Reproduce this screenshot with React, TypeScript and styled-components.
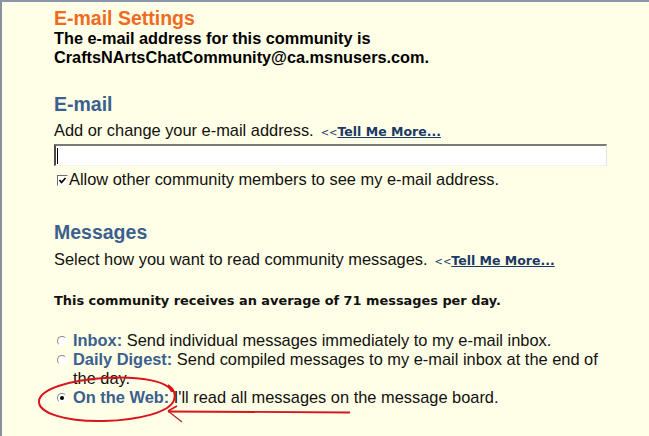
import React from "react";
import styled, { createGlobalStyle } from "styled-components";

const GlobalStyle = createGlobalStyle`
  html, body {
    margin: 0;
    padding: 0;
    background: #fffee6;
  }
  body {
    font-family: "Liberation Sans", Arial, sans-serif;
    color: #000;
  }
`;

const Page = styled.div`
  position: relative;
  box-sizing: border-box;
  width: 649px;
  height: 436px;
  overflow: hidden;
  background: #fffee6;
  border-top: 2px solid #8c96ab;
  border-left: 2px solid #87909e;
  padding: 5px 0 0 52px;
`;

const Column = styled.div`
  width: 553px;
  display: flex;
  flex-direction: column;
`;

const Title = styled.h1`
  margin: 0;
  font-size: 19.5px;
  line-height: 22px;
  font-weight: bold;
  color: #f06a1f;
`;

const Intro = styled.p`
  margin: 0;
  font-size: 16.3px;
  line-height: 19px;
  font-weight: bold;
`;

const SectionHeading = styled.h2<{ $gap: number }>`
  margin: ${(p) => p.$gap}px 0 0 0;
  font-size: 19.5px;
  line-height: 22px;
  font-weight: bold;
  color: #3b5f8e;
`;

const BodyText = styled.p<{ $gap?: number }>`
  margin: ${(p) => p.$gap ?? 0}px 0 0 0;
  font-size: 16.4px;
  line-height: 19px;
  color: #111;
`;

const Chevrons = styled.span`
  font-family: "DejaVu Sans", Verdana, sans-serif;
  font-size: 10px;
  margin-left: 7px;
  color: #1c3966;
`;

const MoreLink = styled.a`
  font-family: "DejaVu Sans", Verdana, sans-serif;
  font-size: 12.5px;
  font-weight: bold;
  color: #1c3966;
  text-decoration: underline;
`;

const EmailInput = styled.div`
  box-sizing: border-box;
  margin-top: 2px;
  width: 553px;
  height: 22px;
  background: #ffffff;
  border-top: 2px solid #7b7b72;
  border-left: 2px solid #4a4a4a;
  border-right: 1px solid #e4e4e4;
  border-bottom: 1px solid #f2f2f2;
  display: flex;
  align-items: center;
  padding-left: 1px;
`;

const Caret = styled.span`
  width: 1px;
  height: 16px;
  background: #000;
`;

const CheckRow = styled.label`
  margin-top: 4px;
  padding-left: 3px;
  display: flex;
  align-items: center;
  gap: 1px;
  font-size: 16.4px;
  line-height: 19px;
  color: #111;
`;

const CheckBox = styled.span`
  box-sizing: border-box;
  width: 11px;
  height: 11px;
  margin-top: 1px;
  background: #fff;
  border: 1px solid;
  border-color: #6f6f6f #f4f4f4 #f4f4f4 #6f6f6f;
  display: flex;
  align-items: center;
  justify-content: center;
`;

const Notice = styled.p`
  margin: 22px 0 0 0;
  font-family: "DejaVu Sans", Verdana, sans-serif;
  font-size: 12.9px;
  line-height: 16px;
  font-weight: bold;
  color: #111;
`;

const OptionList = styled.div`
  margin-top: 22px;
  padding-left: 3px;
  display: flex;
  flex-direction: column;
`;

const Option = styled.div`
  display: flex;
  align-items: flex-start;
  gap: 6px;
  font-size: 16.4px;
  line-height: 19px;
  color: #111;
`;

const Radio = styled.span<{ $checked?: boolean }>`
  box-sizing: border-box;
  flex: none;
  width: 10px;
  height: 10px;
  margin-top: 5px;
  border-radius: 50%;
  border: 1px solid;
  border-color: #8a8a8a #ffffff #ffffff #8a8a8a;
  background: #fff;
  display: flex;
  align-items: center;
  justify-content: center;
  &::after {
    content: "";
    display: ${(p) => (p.$checked ? "block" : "none")};
    width: 4px;
    height: 4px;
    border-radius: 50%;
    background: #000;
  }
`;

const OptionText = styled.span`
  flex: 1;
`;

const OptionName = styled.b`
  color: #3b5f8e;
`;

const Annotation = styled.svg`
  position: absolute;
  left: -2px;
  top: -2px;
  width: 649px;
  height: 436px;
  pointer-events: none;
`;

export default function App() {
  return (
    <>
      <GlobalStyle />
      <Page>
        <Column>
          <Title>E-mail Settings</Title>
          <Intro>
            The e-mail address for this community is
            <br />
            CraftsNArtsChatCommunity@ca.msnusers.com.
          </Intro>

          <SectionHeading $gap={26}>E-mail</SectionHeading>
          <BodyText $gap={6}>
            Add or change your e-mail address.
            <Chevrons>&lt;&lt;</Chevrons>
            <MoreLink href="#">Tell Me More...</MoreLink>
          </BodyText>
          <EmailInput>
            <Caret />
          </EmailInput>
          <CheckRow>
            <CheckBox>
              <svg width="9" height="9" viewBox="0 0 9 9">
                <path d="M1.5 4 L3.5 6.5 L7.5 2" fill="none" stroke="#000" strokeWidth="1.7" />
              </svg>
            </CheckBox>
            Allow other community members to see my e-mail address.
          </CheckRow>

          <SectionHeading $gap={32}>Messages</SectionHeading>
          <BodyText $gap={7}>
            Select how you want to read community messages.
            <Chevrons>&lt;&lt;</Chevrons>
            <MoreLink href="#">Tell Me More...</MoreLink>
          </BodyText>

          <Notice>This community receives an average of 71 messages per day.</Notice>

          <OptionList>
            <Option>
              <Radio />
              <OptionText>
                <OptionName>Inbox:</OptionName> Send individual messages immediately to my e-mail inbox.
              </OptionText>
            </Option>
            <Option>
              <Radio />
              <OptionText>
                <OptionName>Daily Digest:</OptionName> Send compiled messages to my e-mail inbox at the end of
                the day.
              </OptionText>
            </Option>
            <Option>
              <Radio $checked />
              <OptionText>
                <OptionName>On the Web:</OptionName> I'll read all messages on the message board.
              </OptionText>
            </Option>
          </OptionList>
        </Column>

        <Annotation viewBox="0 0 649 436">
          <path
            d="M172 392 C 168 381, 140 376, 105 378 C 70 380, 40 389, 39 401 C 38 413, 66 422, 104 421 C 140 420, 170 412, 174 400 C 176 394, 174 389, 168 385"
            fill="none"
            stroke="#d8141c"
            strokeWidth="2"
          />
          <path d="M168 411.5 L350 412.5" fill="none" stroke="#d8141c" strokeWidth="1.8" />
          <path d="M168 411 L177 406" fill="none" stroke="#d8141c" strokeWidth="1.6" />
          <path d="M168 411 L182 422" fill="none" stroke="#b0303a" strokeWidth="1.4" />
        </Annotation>
      </Page>
    </>
  );
}
